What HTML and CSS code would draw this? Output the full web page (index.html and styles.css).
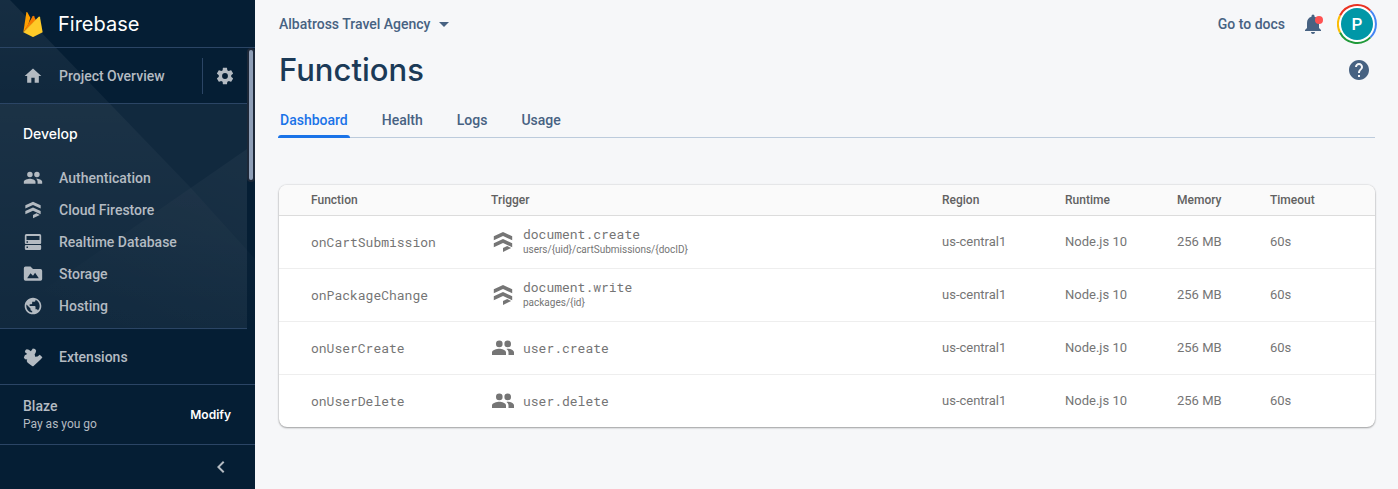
FILE: index.html
```html
<!DOCTYPE html>
<html lang="en">
<head>
<meta charset="utf-8">
<title>Functions – Firebase</title>
<link rel="stylesheet" href="styles.css">
</head>
<body>
<svg class="sprite" aria-hidden="true">
  <symbol id="people" viewBox="0 0 24 24"><path d="M16.700 11.200a3.300 3.300 0 1 0 0-6.600 3.300 3.300 0 0 0 0 6.600zm-8.400 0a3.300 3.300 0 1 0 0-6.600 3.300 3.300 0 0 0 0 6.600zM8.300 12.800c-2.500 0-7.300 1.200-7.300 3.700V19h14v-2.500c0-2.500-4.200-3.700-6.700-3.700zm8.200 0c-.300 0-.700 0-1 .100 1.200.800 2 2 2 3.600V19H23v-2.500c0-2.500-4-3.700-6.500-3.700z"/></symbol>
  <symbol id="firestore" viewBox="0 0 24 24"><path d="M12 2 2.800 6.200v4l9.200-4.200 9.200 4.200v-4zM12 9l-9.200 4.200v4L12 13l9.200 4.200v-4zM12 22v-4l4.200-2 4 2z"/></symbol>
</svg>
<div class="app">
  <aside class="sidebar">
    <svg class="backdrop" viewBox="0 0 255 384" aria-hidden="true">
      <defs>
        <linearGradient id="fade-a" x1="0" y1="0" x2="0" y2="1"><stop offset="0" stop-color="#fff" stop-opacity=".07"/><stop offset=".4" stop-color="#fff" stop-opacity=".035"/><stop offset="1" stop-color="#fff" stop-opacity="0"/></linearGradient>
        <linearGradient id="fade-b" x1="1" y1="0" x2=".4" y2="1"><stop offset="0" stop-color="#fff" stop-opacity=".035"/><stop offset="1" stop-color="#fff" stop-opacity="0"/></linearGradient>
      </defs>
      <path fill="url(#fade-a)" d="M0 0h10l180 187 65 72v75H0z"/>
      <path fill="url(#fade-b)" d="M247 149v181H0v-10z"/>
    </svg>
    <a class="brand" href="#">
      <svg class="flame" viewBox="0 0 60 80" aria-hidden="true">
        <path fill="#ffa000" d="M1 63 10 4q1-3 3-1l9 17-6 20z"/>
        <path fill="#f57c00" d="m1 63 28-48q2-3 4 0l6 12z"/>
        <path fill="#ffca28" d="M1 63 47 17q3-2 4 1l8 45-27 14q-2 1-4 0z"/>
      </svg>
      <span>Firebase</span>
    </a>
    <div class="nav-scroll">
      <nav class="nav">
        <div class="overview">
          <a class="nav-link" href="#"><svg class="icon" viewBox="0 0 24 24"><path d="M10 20v-6h4v6h5v-8h3L12 3 2 12h3v8z"/></svg><span>Project Overview</span></a>
          <button class="settings" type="button" aria-label="Project settings"><svg class="icon" viewBox="0 0 24 24"><path d="M19.400 13c0-.300.100-.600.100-1s0-.700-.100-1l2.100-1.600c.200-.200.200-.400.100-.600l-2-3.500c-.100-.200-.400-.300-.600-.200l-2.500 1c-.500-.400-1.100-.700-1.700-1l-.400-2.600c0-.200-.200-.400-.500-.400h-4c-.200 0-.400.200-.500.400L9.200 5.100c-.600.300-1.200.600-1.700 1L5 5.100c-.200-.100-.500 0-.600.200l-2 3.500c-.100.200-.100.400.100.600L4.600 11c0 .300-.100.600-.100 1s0 .700.100 1l-2.100 1.600c-.200.200-.200.400-.100.600l2 3.500c.100.200.400.300.600.200l2.500-1c.500.400 1.100.700 1.700 1l.200 2.600c.100.200.300.400.500.400h4c.200 0 .500-.200.500-.400l.400-2.600c.600-.300 1.200-.600 1.700-1l2.500 1c.200.100.500 0 .600-.200l2-3.500c.100-.200.100-.500-.100-.600zM12 15.500a3.500 3.500 0 1 1 0-7 3.500 3.500 0 0 1 0 7z"/></svg></button>
        </div>
        <section class="group">
          <h2>Develop</h2>
          <a class="nav-link" href="#"><svg class="icon"><use href="#people"/></svg><span>Authentication</span></a>
          <a class="nav-link" href="#"><svg class="icon"><use href="#firestore"/></svg><span>Cloud Firestore</span></a>
          <a class="nav-link" href="#"><svg class="icon" viewBox="0 0 24 24"><path fill-rule="evenodd" d="M4 2.400h16a1.800 1.800 0 0 1 1.800 1.800v9a1.200 1.200 0 0 1-1.200 1.200H3.400a1.200 1.200 0 0 1-1.200-1.200v-9A1.800 1.800 0 0 1 4 2.400zm.200 2.400v4.800h15.600V4.800zm0 6.400v1.800H6v-1.800zM3.400 15.600h17.200a1.200 1.200 0 0 1 1.200 1.200v3a1.800 1.800 0 0 1-1.800 1.800H4a1.800 1.800 0 0 1-1.800-1.800v-3a1.200 1.200 0 0 1 1.200-1.200zm.800 1.800v1.800H6v-1.800z"/></svg><span>Realtime Database</span></a>
          <a class="nav-link" href="#"><svg class="icon" viewBox="0 0 24 24"><path fill-rule="evenodd" d="M3 3h6l3 3h9a2 2 0 0 1 2 2v10a2 2 0 0 1-2 2H3a2 2 0 0 1-2-2V5a2 2 0 0 1 2-2zm2 14h14l-4.500-6.500-2.500 3.500-3-3z"/></svg><span>Storage</span></a>
          <a class="nav-link" href="#"><svg class="icon" viewBox="0 0 24 24"><path d="M12 2C6.480 2 2 6.480 2 12s4.480 10 10 10 10-4.480 10-10S17.520 2 12 2zm-1 17.930c-3.950-.490-7-3.850-7-7.930 0-.620.080-1.210.210-1.790L9 15v1c0 1.100.900 2 2 2v1.930zm6.900-2.540c-.260-.810-1-1.390-1.900-1.390h-1v-3c0-.550-.450-1-1-1H8v-2h2c.550 0 1-.450 1-1V7h2c1.100 0 2-.900 2-2v-.410c2.930 1.190 5 4.060 5 7.410 0 2.080-.800 3.970-2.100 5.390z"/></svg><span>Hosting</span></a>
        </section>
        <a class="nav-link extensions" href="#"><svg class="icon" viewBox="0 0 24 24"><path d="M3 3.600 4.600 2.800 7 3.200l2.400 1.900 2.400-3.400 2.700.700 1.300 2-.800 2.700-1 1.700.600 2.800 2.800-.200 2.700-2 3.200 3-1.600 2-9 8.300q-.8.600-1.800 0L5.600 18.800l-1.200-2 .700-1.800-2.700-.4-1.400-2 1.200-2.800 2.800-1.400L2.200 6z"/></svg><span>Extensions</span></a>
      </nav>
      <div class="scrollbar"><div class="thumb"></div></div>
    </div>
    <div class="plan">
      <div><strong>Blaze</strong><p>Pay as you go</p></div>
      <button type="button">Modify</button>
    </div>
    <div class="collapse">
      <button type="button" aria-label="Collapse navigation"><svg viewBox="0 0 24 24"><path d="M15.410 7.410 14 6l-6 6 6 6 1.410-1.410L10.830 12z"/></svg></button>
    </div>
  </aside>
  <main class="main">
    <header class="topbar">
      <button class="project" type="button"><span>Albatross Travel Agency</span><svg class="caret" viewBox="0 0 10 5"><path d="M0 0h10L5 5z"/></svg></button>
      <a class="docs" href="#">Go to docs</a>
      <button class="bell" type="button" aria-label="Notifications"><svg class="bell-icon" viewBox="0 0 24 24"><path d="M12 22c1.100 0 2-.900 2-2h-4c0 1.100.900 2 2 2zm6-6v-5c0-3.100-1.600-5.600-4.500-6.300V4a1.500 1.500 0 0 0-3 0v.700C7.600 5.400 6 7.900 6 11v5l-2 2v1h16v-1z"/><circle cx="18" cy="8" r="4" fill="#ff5252"/></svg></button>
      <button class="account" type="button" aria-label="Account">
        <svg class="ring" viewBox="0 0 40 40" aria-hidden="true"><g fill="none" stroke-width="2"><path stroke="#ea3323" d="M3 11.500A19 19 0 0 1 33.400 6.600"/><path stroke="#4285f4" d="M33.400 6.600a19 19 0 0 1 0 26.800"/><path stroke="#219a3a" d="M33.400 33.400A19 19 0 0 1 3 28.500"/><path stroke="#fbbc04" d="M3 28.500a19 19 0 0 1 0-17"/></g></svg>
        <span class="avatar">P</span>
      </button>
    </header>
    <div class="heading">
      <h1>Functions</h1>
      <button type="button" aria-label="Help"><svg viewBox="0 0 24 24"><path d="M12 2C6.480 2 2 6.480 2 12s4.480 10 10 10 10-4.480 10-10S17.520 2 12 2zm1 17h-2v-2h2v2zm2.070-7.750-.900.920C13.450 12.900 13 13.500 13 15h-2v-.500c0-1.100.450-2.100 1.170-2.830l1.240-1.260c.370-.360.590-.860.590-1.410 0-1.100-.900-2-2-2s-2 .900-2 2H8c0-2.210 1.790-4 4-4s4 1.790 4 4c0 .880-.360 1.680-.930 2.250z"/></svg></button>
    </div>
    <nav class="tabs">
      <a class="active" href="#">Dashboard</a><a href="#">Health</a><a href="#">Logs</a><a href="#">Usage</a>
    </nav>
    <div class="card">
      <table>
        <colgroup><col class="c-function"><col><col class="c-region"><col class="c-runtime"><col class="c-memory"><col class="c-timeout"></colgroup>
        <thead><tr><th>Function</th><th>Trigger</th><th>Region</th><th>Runtime</th><th>Memory</th><th>Timeout</th></tr></thead>
        <tbody>
          <tr><td class="mono">onCartSubmission</td><td><div class="trigger"><svg><use href="#firestore"/></svg><div><div class="mono">document.create</div><div class="path">users/{uid}/cartSubmissions/{docID}</div></div></div></td><td>us-central1</td><td>Node.js 10</td><td>256 MB</td><td>60s</td></tr>
          <tr><td class="mono">onPackageChange</td><td><div class="trigger"><svg><use href="#firestore"/></svg><div><div class="mono">document.write</div><div class="path">packages/{id}</div></div></div></td><td>us-central1</td><td>Node.js 10</td><td>256 MB</td><td>60s</td></tr>
          <tr><td class="mono">onUserCreate</td><td><div class="trigger"><svg><use href="#people"/></svg><div class="mono">user.create</div></div></td><td>us-central1</td><td>Node.js 10</td><td>256 MB</td><td>60s</td></tr>
          <tr><td class="mono">onUserDelete</td><td><div class="trigger"><svg><use href="#people"/></svg><div class="mono">user.delete</div></div></td><td>us-central1</td><td>Node.js 10</td><td>256 MB</td><td>60s</td></tr>
        </tbody>
      </table>
    </div>
  </main>
</div>
</body>
</html>
```
FILE: styles.css
```css
* { box-sizing: border-box; }
body { margin: 0; font-family: Roboto, "Liberation Sans", sans-serif; font-size: 14px; line-height: 20px; color: #476282; background: #f6f7f9; }
h1, h2, p { margin: 0; }
a { color: inherit; text-decoration: none; }
button { border: 0; padding: 0; background: none; color: inherit; font: inherit; cursor: pointer; }
svg { display: block; fill: currentColor; flex: none; }
.sprite { display: none; }
.app { display: flex; min-height: 100vh; }

.sidebar { position: relative; z-index: 0; flex: none; display: flex; flex-direction: column; width: 255px; background: #051e34; color: #b4bbc2; font-weight: 500; }
.backdrop { position: absolute; z-index: -1; top: 0; left: 0; width: 100%; }
.brand { display: flex; align-items: center; gap: 15px; height: 48px; padding: 1px 23px 0; border-bottom: 1px solid #2b4565; color: #fff; font-family: Inter, sans-serif; font-size: 20px; font-weight: 400; }
.flame { width: 20px; height: 27px; }
.nav-scroll { flex: 1; display: flex; }
.nav { flex: 1; }
.icon { width: 20px; height: 20px; }
.nav-link { display: flex; align-items: center; gap: 16px; height: 32px; padding-left: 23px; }
.overview { display: flex; align-items: center; height: 56px; border-bottom: 1px solid #2b4565; }
.overview .nav-link { flex: 1; }
.settings { display: flex; align-items: center; justify-content: center; width: 45px; height: 36px; border-left: 1px solid #2b4565; }
.group { padding-bottom: 6px; border-bottom: 1px solid #2b4565; background: rgba(255, 255, 255, .05); }
.group h2 { padding: 20px 23px 18px; color: #fff; font-family: Inter, sans-serif; font-size: 14px; font-weight: 500; line-height: 20px; }
.nav .extensions { height: 55px; }
.scrollbar { width: 8px; padding: 2px; }
.thumb { width: 4px; height: 130px; border-radius: 2px; background: #8f9fb7; box-shadow: 0 0 0 2px #1d2838; }
.plan { display: flex; align-items: center; justify-content: space-between; height: 61px; padding: 0 24px 0 23px; border: 1px solid #2b4565; border-width: 1px 0; }
.plan strong { display: block; font-weight: 500; line-height: 18px; }
.plan p { font-size: 12px; font-weight: 400; line-height: 18px; }
.plan button { color: #fff; font-family: Inter, sans-serif; font-size: 12px; font-weight: 600; }
.collapse { display: flex; align-items: center; justify-content: flex-end; height: 44px; padding-right: 22px; }
.collapse svg { width: 24px; height: 24px; }

.main { flex: 1; min-width: 0; padding: 0 23px 0 24px; }
.topbar { display: flex; align-items: center; height: 48px; margin-right: -2px; font-weight: 500; }
.project { display: flex; align-items: center; gap: 9px; margin-right: auto; }
.caret { width: 10px; height: 5px; }
.bell { margin: 0 12px 0 16px; }
.bell-icon { width: 24px; height: 24px; }
.account { position: relative; display: grid; place-items: center; width: 40px; height: 40px; }
.ring { position: absolute; inset: 0; }
.avatar { display: grid; place-items: center; width: 32px; height: 32px; border-radius: 50%; background: #0097a7; color: #fff; font-size: 17px; box-shadow: 0 0 0 2px #fff; }
.heading { display: flex; align-items: center; justify-content: space-between; height: 44px; padding-right: 4px; }
.heading h1 { color: #1b3a57; font-family: Inter, sans-serif; font-size: 31px; font-weight: 500; line-height: 46px; }
.heading svg { width: 24px; height: 24px; }
.tabs { display: flex; gap: 30px; height: 46px; margin: 0 0 47px -1px; padding-top: 10px; border-bottom: 1px solid #bccbdc; font-weight: 500; }
.tabs a { height: 36px; padding: 8px 2px; }
.tabs .active { position: relative; color: #1a73e8; }
.tabs .active::after { content: ""; position: absolute; right: 0; bottom: 0; left: 0; height: 3px; border-radius: 3px 3px 0 0; background: #1a73e8; }

.card { overflow: hidden; border-radius: 8px; background: #fff; box-shadow: 0 1px 2px rgba(0, 0, 0, .32), 0 0 2px rgba(0, 0, 0, .2); }
table { width: 100%; border-collapse: separate; border-spacing: 0; table-layout: fixed; color: #757575; font-size: 13px; }
.c-function { width: 212px; }
.c-region { width: 123px; }
.c-runtime { width: 112px; }
.c-memory { width: 93px; }
.c-timeout { width: 105px; }
th, td { padding: 0; text-align: left; vertical-align: middle; }
th:first-child, td:first-child { padding-left: 32px; }
th { height: 31px; border-bottom: 1px solid #dcdcdc; background: #fafafa; color: #616161; font-size: 12px; font-weight: 500; }
td { height: 53px; border-bottom: 1px solid #eee; }
tr:last-child td { height: 52px; border-bottom: 0; }
.mono { font-family: "Roboto Mono", "Liberation Mono", monospace; font-size: 13px; line-height: 16px; }
.trigger { display: flex; align-items: center; gap: 8px; }
.trigger svg { width: 24px; height: 24px; }
.path { font-size: 10px; line-height: 16px; }
```
